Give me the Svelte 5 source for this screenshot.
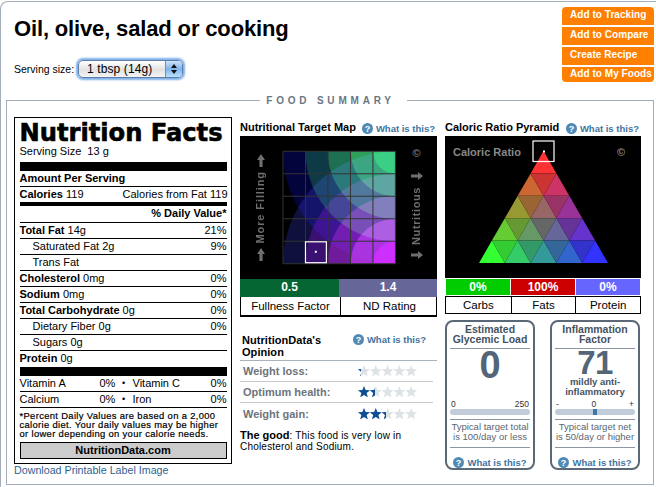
<script>
  const actions = ['Add to Tracking', 'Add to Compare', 'Create Recipe', 'Add to My Foods'];

  const factRows = [
    { label: 'Total Fat', value: '14g', pct: '21%' },
    { label: 'Saturated Fat', value: '2g', pct: '9%', sub: true },
    { label: 'Trans Fat', value: '', pct: '', sub: true },
    { label: 'Cholesterol', value: '0mg', pct: '0%' },
    { label: 'Sodium', value: '0mg', pct: '0%' },
    { label: 'Total Carbohydrate', value: '0g', pct: '0%' },
    { label: 'Dietary Fiber', value: '0g', pct: '0%', sub: true },
    { label: 'Sugars', value: '0g', pct: '', sub: true },
    { label: 'Protein', value: '0g', pct: '' },
  ];

  const opinions = [
    { label: 'Weight loss:', stars: 0.25 },
    { label: 'Optimum health:', stars: 1.44 },
    { label: 'Weight gain:', stars: 2.38 },
  ];

  const radii = [113, 90.5, 68, 45, 22.5];
  const greens = ['#04043c', '#0e3a48', '#1e7052', '#2ea05a', '#2ecc60'];
  const purples = ['#10103c', '#3a1070', '#701a9c', '#a830d8', '#cc2cff'];
  const gridLines = [0, 22.6, 45.2, 67.8, 90.4, 113];

  // pyramid: 5 rows, colour from red/green/blue weights
  const top = { x: 98.5, y: 15 };
  const rowH = 112 / 5;
  const halfW = 129 / 10;
  const tint = (r, g, b) => `rgb(${51 + r * 51},${51 + g * 51},${51 + b * 51})`;
  const tris = [];
  for (let r = 0; r < 5; r++) {
    const y0 = top.y + r * rowH;
    const y1 = y0 + rowH;
    for (let i = 0; i <= r; i++) {
      const cx = top.x + (2 * i - r) * halfW;
      tris.push({ pts: `${cx},${y0} ${cx - halfW},${y1} ${cx + halfW},${y1}`, fill: tint(4 - r, r - i, i) });
      if (i < r) {
        const nx = cx + halfW;
        tris.push({ pts: `${nx - halfW},${y0} ${nx + halfW},${y0} ${nx},${y1}`, fill: tint(4 - r, r - 1 - i, i) });
      }
    }
  }

  const starPts = '6,0 7.6,4 12,4.3 8.6,7 9.8,11.2 6,8.9 2.2,11.2 3.4,7 0,4.3 4.4,4';
</script>

{#snippet help()}
  <span class="help">
    <svg width="11" height="11" viewBox="0 0 11 11"><circle cx="5.5" cy="5.5" r="5.5" fill="#4f8ab5" /><text x="5.5" y="8.6" text-anchor="middle" class="qmark">?</text></svg>
    <span>What is this?</span>
  </span>
{/snippet}

<div class="page">
  <header class="top">
    <div>
      <h1>Oil, olive, salad or cooking</h1>
      <div class="serving">
        <span>Serving size:</span>
        <div class="select">
          <span class="select-text">1 tbsp (14g)</span>
          <span class="select-cap"><i class="up"></i><i class="down"></i></span>
        </div>
      </div>
    </div>
    <div class="actions">
      {#each actions as a}
        <div class="action">{a}</div>
      {/each}
    </div>
  </header>

  <fieldset class="summary">
    <legend>FOOD SUMMARY</legend>
    <div class="columns">
      <div class="col-facts">
        <div class="facts">
          <div class="facts-title">Nutrition Facts</div>
          <div class="facts-serving">Serving Size&nbsp; 13 g</div>
          <div class="bar-thick"></div>
          <div class="row"><b>Amount Per Serving</b></div>
          <div class="row cal"><span><b>Calories</b> 119</span><span class="over">Calories from Fat 119</span></div>
          <div class="bar-mid"></div>
          <div class="row right"><b>% Daily Value*</b></div>
          {#each factRows as f}
            <div class="row" class:sub={f.sub} class:last={f.label === 'Protein'}>
              <span>{#if f.sub}{f.label}{:else}<b>{f.label}</b>{/if} {f.value}</span>
              <span>{f.pct}</span>
            </div>
          {/each}
          <div class="bar-thick second"></div>
          <div class="row vit"><span class="v-name">Vitamin A</span><span class="v-pct">0%</span><span class="dot">•</span><span class="v-name2">Vitamin C</span><span class="v-pct2">0%</span></div>
          <div class="row vit"><span class="v-name">Calcium</span><span class="v-pct">0%</span><span class="dot">•</span><span class="v-name2">Iron</span><span class="v-pct2">0%</span></div>
          <p class="footnote">*Percent Daily Values are based on a 2,000 calorie diet. Your daily values may be higher or lower depending on your calorie needs.</p>
          <div class="brand">NutritionData.com</div>
        </div>
        <div class="download">Download Printable Label Image</div>
      </div>

      <div class="col-mid">
        <div class="head"><h3>Nutritional Target Map</h3>{@render help()}</div>
        <div class="map">
          <div class="side">
            <svg width="8" height="13" viewBox="0 0 8 13"><path d="M4 0 8 6H5.6V13H2.4V6H0Z" fill="#6e6e6e" /></svg>
            <span class="vert">More Filling</span>
            <svg width="8" height="13" viewBox="0 0 8 13"><path d="M4 0 8 6H5.6V13H2.4V6H0Z" fill="#6e6e6e" /></svg>
          </div>
          <svg class="map-grid" width="115" height="115" viewBox="-1 -1 115 115">
            <defs><clipPath id="mapclip"><rect width="113" height="113" /></clipPath></defs>
            <g clip-path="url(#mapclip)">
              <rect width="113" height="113" fill="#000" />
              <g class="screen">
                {#each radii as r, i}<circle cx="113" cy="0" {r} fill={greens[i]} />{/each}
              </g>
              <g class="screen">
                {#each radii as r, i}<circle cx="113" cy="113" {r} fill={purples[i]} />{/each}
              </g>
            </g>
            {#each gridLines as g}
              <path d="M{g} 0V113M0 {g}H113" stroke="#333" stroke-width="1" fill="none" />
            {/each}
            <rect x="22.6" y="91" width="21" height="21" fill="none" stroke="#fff" stroke-width="1.2" />
            <rect x="32" y="100" width="2" height="2" fill="#fff" />
          </svg>
          <div class="side right-side">
            <span class="copy">©</span>
            <svg width="12" height="8" viewBox="0 0 12 8"><path d="M12 4 7 8V5.6H0V2.4H7V0Z" fill="#6e6e6e" /></svg>
            <span class="vert short">Nutritious</span>
            <svg width="12" height="8" viewBox="0 0 12 8"><path d="M12 4 7 8V5.6H0V2.4H7V0Z" fill="#6e6e6e" /></svg>
          </div>
        </div>
        <div class="values two">
          <div class="val" style="background:#066633">0.5</div>
          <div class="val" style="background:#666699">1.4</div>
        </div>
        <div class="labels two"><div>Fullness Factor</div><div>ND Rating</div></div>

        <div class="opinion">
          <div class="op-head"><h3 class="op-title">NutritionData's<br />Opinion</h3>{@render help()}</div>
          {#each opinions as o, oi}
            <div class="op-row">
              <span>{o.label}</span>
              <svg width="60" height="12" viewBox="0 0 60 12">
                <defs><clipPath id={'stars' + oi}><rect width={o.stars * 11.8} height="12" /></clipPath></defs>
                {#each [0, 1, 2, 3, 4] as n}
                  <polygon points={starPts} transform="translate({n * 11.8} 0)" fill="#dde2e5" />
                {/each}
                <g clip-path="url(#{'stars' + oi})">
                  {#each [0, 1, 2, 3, 4] as n}
                    <polygon points={starPts} transform="translate({n * 11.8} 0)" fill="#0d4f92" />
                  {/each}
                </g>
              </svg>
            </div>
          {/each}
          <p class="good"><b>The good</b>: This food is very low in Cholesterol and Sodium.</p>
        </div>
      </div>

      <div class="col-right">
        <div class="head"><h3>Caloric Ratio Pyramid</h3>{@render help()}</div>
        <svg class="pyramid" width="196" height="142" viewBox="0 0 196 142">
          <rect width="196" height="142" fill="#000" />
          <text x="8" y="20" class="pyr-label">Caloric Ratio</text>
          <text x="176" y="20" class="pyr-copy" text-anchor="middle">©</text>
          {#each tris as t}<polygon points={t.pts} fill={t.fill} />{/each}
          <rect x="88" y="5" width="21" height="20.5" fill="none" stroke="#fff" stroke-width="1.2" />
          <rect x="98" y="14.5" width="2" height="2" fill="#fff" />
        </svg>
        <div class="values three">
          <div class="val" style="background:#00cc00">0%</div>
          <div class="val" style="background:#cc0000">100%</div>
          <div class="val" style="background:#6666ff">0%</div>
        </div>
        <div class="labels three tri"><div>Carbs</div><div>Fats</div><div>Protein</div></div>

        <div class="cards">
          <div class="card">
            <div class="card-title">Estimated<br />Glycemic Load</div>
            <div class="card-main"><div class="big">0</div></div>
            <div class="scale"><span>0</span><span>250</span></div>
            <div class="track"></div>
            <div class="note">Typical target total<br />is 100/day or less</div>
            <div class="card-help">{@render help()}</div>
          </div>
          <div class="card">
            <div class="card-title">Inflammation<br />Factor</div>
            <div class="card-main"><div class="big small">71</div><div class="mild">mildly anti-<br />inflammatory</div></div>
            <div class="scale"><span>-</span><span>0</span><span>+</span></div>
            <div class="track"><i class="mark"></i></div>
            <div class="note">Typical target net<br />is 50/day or higher</div>
            <div class="card-help">{@render help()}</div>
          </div>
        </div>
      </div>
    </div>
  </fieldset>
</div>

<style>
  :global(body) { margin: 0; background: #fff; }

  .page {
    box-sizing: border-box;
    width: 656px;
    height: 486px;
    overflow: hidden;
    border-top: 1px solid #a3adba;
    border-left: 1px solid #a3adba;
    border-top-left-radius: 8px;
    margin-top: 1px;
    font-family: 'Liberation Sans', Arial, sans-serif;
    color: #000;
    position: relative;
  }

  .top {
    box-sizing: border-box;
    display: flex;
    justify-content: space-between;
    height: 92px;
    padding: 5px 2px 0 13px;
  }

  h1 {
    margin: 9px 0 0;
    font-size: 22px;
    line-height: 26px;
    font-weight: 700;
    letter-spacing: -0.15px;
  }

  .serving {
    display: flex;
    align-items: center;
    gap: 4px;
    margin-top: 18px;
    font-size: 10.5px;
  }

  .select {
    box-sizing: border-box;
    width: 105px;
    height: 18px;
    display: flex;
    justify-content: space-between;
    border-radius: 5px;
    border: 1px solid #5f7da8;
    box-shadow: 0 0 2px 2px #7db0e8;
    background: linear-gradient(#fff, #e2e2e2 55%, #f4f4f4);
    overflow: hidden;
  }

  .select-text {
    padding-left: 8px;
    font-size: 12px;
    line-height: 16px;
    letter-spacing: 0.1px;
  }

  .select-cap {
    width: 16px;
    display: flex;
    flex-direction: column;
    align-items: center;
    justify-content: center;
    gap: 2px;
    border-left: 1px solid #6f8fc0;
    background: linear-gradient(#cfe2fa, #7fb4ee 50%, #b8e0fb);
  }

  .select-cap i { width: 0; height: 0; border-left: 3px solid transparent; border-right: 3px solid transparent; }
  .select-cap .up { border-bottom: 4px solid #111; }
  .select-cap .down { border-top: 4px solid #111; }

  .actions {
    width: 92px;
    display: flex;
    flex-direction: column;
    gap: 2px;
  }

  .action {
    height: 18px;
    padding-left: 8px;
    background: #ff7f00;
    color: #fff;
    font-size: 10px;
    font-weight: 700;
    line-height: 16px;
    letter-spacing: 0.05px;
    white-space: nowrap;
  }
  .action:first-child { border-radius: 4px 4px 0 0; }
  .action:last-child { height: 15px; line-height: 14px; border-radius: 0 0 4px 4px; }

  .summary {
    box-sizing: border-box;
    width: 648px;
    height: 391px;
    margin: 0 0 0 5px;
    padding: 11px 0 0 7px;
    border: 1px solid #a3adba;
    min-width: 0;
  }

  legend {
    margin: 0 auto;
    padding: 2px 12px 0 6px;
    font-size: 10px;
    font-weight: 700;
    line-height: 1;
    letter-spacing: 3.8px;
    color: #6b7684;
  }

  .columns {
    display: flex;
    align-items: flex-start;
  }

  .col-facts { width: 218px; margin-right: 8px; }
  .col-mid { width: 197px; margin-right: 8px; }
  .col-right { width: 196px; }

  .facts {
    box-sizing: border-box;
    height: 347px;
    border: 1.5px solid #000;
    padding: 4px 4.5px 0;
    font-size: 11px;
  }

  .facts-title {
    font-family: 'DejaVu Sans', sans-serif;
    font-size: 24.2px;
    font-weight: 700;
    line-height: 22px;
    -webkit-text-stroke: 0.6px #000;
    white-space: nowrap;
  }

  .facts-serving { line-height: 14px; font-size: 11px; }

  .bar-thick { height: 9px; background: #000; margin-top: 4px; }
  .bar-thick.second { margin-top: 0; }
  .bar-mid { height: 4px; background: #000; }

  .row {
    box-sizing: border-box;
    height: 16px;
    line-height: 15px;
    display: flex;
    justify-content: space-between;
    border-bottom: 1px solid #000;
    white-space: nowrap;
  }
  .row.cal { height: 15px; border-bottom: none; }
  .row.right { justify-content: flex-end; height: 17px; }
  .row.sub { padding-left: 13px; }
  .row.last { border-bottom: none; }
  .row .over { margin-right: -1px; }

  .v-name { width: 80px; }
  .v-pct { width: 15px; margin-right: 3px; text-align: right; white-space: nowrap; }
  .dot { width: 12px; text-align: center; font-size: 9px; }
  .v-name2 { width: 6px; flex: 1; margin-left: 3px; }
  .v-pct2 { width: 20px; text-align: right; }
  .vit { justify-content: flex-start; }

  .footnote {
    margin: 3px 0 0;
    font-size: 9.4px;
    font-weight: 400;
    line-height: 9px;
    letter-spacing: 0.35px;
    -webkit-text-stroke: 0.2px #000;
  }

  .brand {
    box-sizing: border-box;
    height: 17px;
    margin-top: 4px;
    background: #ccc;
    border: 1px solid #000;
    text-align: center;
    font-size: 11px;
    font-weight: 700;
    line-height: 15px;
  }

  .download {
    font-size: 10.7px;
    line-height: 13px;
    color: #2f5f92;
  }

  .head {
    display: flex;
    align-items: flex-end;
    justify-content: space-between;
    height: 17px;
    padding-bottom: 2px;
  }

  h3 {
    margin: 0;
    font-size: 11px;
    line-height: 13px;
    font-weight: 700;
    white-space: nowrap;
  }

  .help {
    display: inline-flex;
    align-items: center;
    gap: 3px;
    margin-right: 2px;
    font-size: 9.5px;
    font-weight: 700;
    color: #41749f;
    white-space: nowrap;
  }
  .help svg { display: block; }
  .qmark { fill: #fff; font-size: 9px; font-weight: 700; }

  .map {
    height: 143px;
    background: #000;
    display: flex;
    align-items: center;
  }

  .side {
    width: 42px;
    display: flex;
    flex-direction: column;
    align-items: center;
    gap: 4px;
  }
  .side svg { display: block; flex: none; }
  .right-side { width: 41px; margin-top: -8px; gap: 7px; }
  .right-side .copy { margin-bottom: 7px; }

  .map-grid { display: block; margin-top: -1px; }

  .screen { mix-blend-mode: screen; }

  .vert {
    writing-mode: vertical-rl;
    transform: rotate(180deg);
    font-size: 11px;
    font-weight: 700;
    letter-spacing: 0.9px;
    line-height: 11px;
    color: #6e6e6e;
    white-space: nowrap;
  }
  .vert.short { letter-spacing: 0.6px; }

  .copy { font-size: 11px; font-weight: 700; color: #777; line-height: 10px; }

  .values, .labels { display: grid; }
  .two { grid-template-columns: 99px 98px; }
  .three { grid-template-columns: 1fr 1fr 1fr; }

  .val {
    height: 18px;
    color: #fff;
    font-size: 12px;
    font-weight: 700;
    line-height: 17px;
    text-align: center;
  }

  .values.three { box-sizing: border-box; height: 17px; margin-top: 1px; padding: 0 1px; gap: 1px; }
  .values.three .val { height: 16px; line-height: 16px; }

  .labels {
    box-sizing: border-box;
    height: 20px;
    border: 1px solid #000;
    border-top: none;
    border-bottom-width: 2px;
    font-size: 11.5px;
    text-align: center;
    line-height: 18px;
  }
  .labels > div + div { border-left: 1px solid #000; }
  .labels.tri { height: 18px; line-height: 16px; border-bottom-width: 1px; border-top: 1px solid #000; }

  .pyramid { display: block; }
  .pyr-label { fill: #888; font-size: 11px; font-weight: 700; }
  .pyr-copy { fill: #888; font-size: 11px; font-weight: 700; }

  .opinion { margin-top: 17px; }

  .op-head {
    box-sizing: border-box;
    display: flex;
    justify-content: space-between;
    align-items: flex-start;
    padding: 0 0 0 2px;
    border-bottom: 1px solid #aab2bb;
    height: 27px;
  }
  .op-title { line-height: 12px; letter-spacing: 0.05px; }
  .op-head .help { margin: 0 11px 0 0; }

  .op-row {
    box-sizing: border-box;
    height: 21px;
    width: 193px;
    display: flex;
    align-items: center;
    padding-left: 3px;
    justify-content: space-between;
    border-bottom: 1px solid #c4cad0;
    font-size: 11px;
    font-weight: 700;
    color: #6d747c;
  }
  .op-row svg { margin-right: 15px; }
  .op-row:last-of-type { border-bottom: none; }

  .good {
    margin: 6px 0 0;
    font-size: 10px;
    line-height: 11px;
    letter-spacing: 0.2px;
  }
  .good b { font-size: 11px; letter-spacing: 0; }

  .cards { display: flex; justify-content: space-between; margin-top: 6px; width: 195px; }

  .card {
    box-sizing: border-box;
    width: 90px;
    height: 150px;
    border: 2px solid #5a6878;
    border-radius: 8px;
    padding: 2px 3px 0;
    text-align: center;
    color: #46525f;
  }

  .card-title {
    box-sizing: border-box;
    height: 25px;
    font-size: 10.5px;
    font-weight: 700;
    line-height: 10px;
    border-bottom: 1px solid #8c96a2;
    white-space: nowrap;
  }

  .card-main { height: 51px; }

  .big {
    font-size: 38px;
    font-weight: 700;
    line-height: 32px;
    color: #536578;
  }
  .big.small { font-size: 33px; line-height: 28px; letter-spacing: -0.5px; }

  .mild { font-size: 9.5px; font-weight: 700; line-height: 10px; }

  .scale {
    display: flex;
    justify-content: space-between;
    padding: 0 1px;
    font-size: 8.5px;
    line-height: 9px;
    color: #333;
  }

  .track {
    position: relative;
    height: 6px;
    border-radius: 3px;
    background: #c0ccd9;
  }

  .mark {
    position: absolute;
    left: 38px;
    top: 0;
    width: 4px;
    height: 6px;
    background: #3a78a8;
  }

  .note {
    margin-top: 4px;
    padding: 2px 0 5px;
    border-top: 1px solid #8c96a2;
    border-bottom: 1px solid #8c96a2;
    font-size: 9.5px;
    line-height: 10px;
    color: #5a6570;
    white-space: nowrap;
  }

  .card-help { padding-top: 6px; }
  .card-help .help { margin: 0; }
</style>
